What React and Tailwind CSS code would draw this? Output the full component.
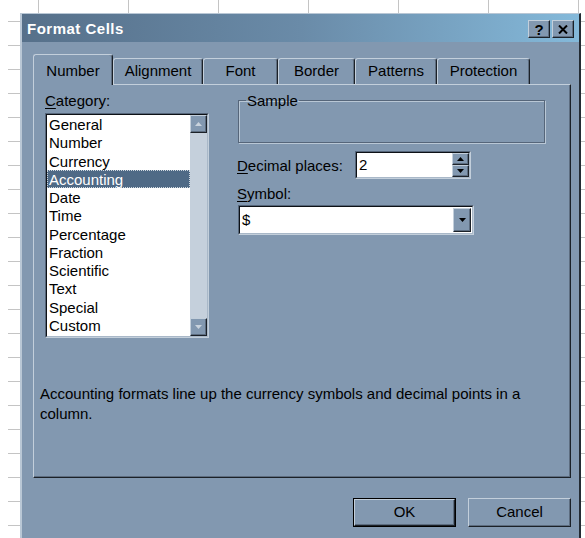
import React from 'react';

const categories = [
  'General', 'Number', 'Currency', 'Accounting', 'Date', 'Time',
  'Percentage', 'Fraction', 'Scientific', 'Text', 'Special', 'Custom',
];

const tabs = [
  { label: 'Number', w: 'w-[80px]', active: true },
  { label: 'Alignment', w: 'w-[90px]' },
  { label: 'Font', w: 'w-[75px]' },
  { label: 'Border', w: 'w-[77px]' },
  { label: 'Patterns', w: 'w-[82px]' },
  { label: 'Protection', w: 'w-[93px]' },
];

// raised 3D edge used by buttons
const raised =
  'border border-t-[#c3cfdb] border-l-[#c3cfdb] border-r-[#1b2128] border-b-[#1b2128] shadow-[inset_-1px_-1px_0_#5d6d80]';

const Arrow = ({ up, color = '#000' }) => (
  <svg width="7" height="4" viewBox="0 0 7 4">
    <path d={up ? 'M0 4h7L3.5 0z' : 'M0 0h7L3.5 4z'} fill={color} />
  </svg>
);

const Sunken = ({ className, children }) => (
  <div className={`border border-t-[#56667a] border-l-[#56667a] border-r-[#c3cfdb] border-b-[#c3cfdb] ${className}`}>
    <div className="w-full h-full border border-t-[#0d1116] border-l-[#0d1116] border-r-[#a9b8c8] border-b-[#a9b8c8] bg-white flex">
      {children}
    </div>
  </div>
);

const Hotkey = ({ k, rest }) => (
  <span>
    <span className="underline underline-offset-2">{k}</span>
    {rest}
  </span>
);

export default function App() {
  return (
    <div className="w-[585px] h-[538px] overflow-hidden bg-white flex font-['Liberation_Sans',Arial,sans-serif] text-[15px] text-black">
      {/* spreadsheet row ticks behind the dialog */}
      <div className="w-[20px] flex flex-col pt-[21px] gap-[23px]">
        {Array.from({ length: 22 }).map((_, i) => (
          <div key={i} className="h-px w-[12px] ml-[8px] bg-[#c4c4c4]" />
        ))}
      </div>

      <div className="w-[561px] flex flex-col">
        {/* column ticks */}
        <div className="h-[13px] shrink-0 flex pl-[18px] gap-[89px]">
          {Array.from({ length: 7 }).map((_, i) => (
            <div key={i} className="w-px h-full bg-[#c4c4c4]" />
          ))}
        </div>

        {/* dialog window */}
        <div className="flex-1 flex flex-col bg-[#8298b0] border-t border-l-2 border-r-2 border-t-[#b9c7d5] border-l-[#b9c7d5] border-r-[#232b33]">
          {/* title bar */}
          <div className="h-[28px] shrink-0 flex items-center justify-between pl-[5px] pr-[5px] bg-gradient-to-r from-[#56708a] via-[#6a8ba8] to-[#84b9da]">
            <span className="text-white font-bold tracking-[0.5px] leading-none">Format Cells</span>
            <div className="flex gap-[2px] mt-[2px]">
              <div className={`w-[22px] h-[18px] flex items-center justify-center bg-[#8298b0] ${raised}`}>
                <span className="font-bold text-[15px] leading-none">?</span>
              </div>
              <div className={`w-[22px] h-[18px] flex items-center justify-center bg-[#8298b0] ${raised}`}>
                <svg width="10" height="9" viewBox="0 0 10 9">
                  <path d="M1 0.5l8 8M9 0.5l-8 8" stroke="#000" strokeWidth="2" />
                </svg>
              </div>
            </div>
          </div>

          {/* body */}
          <div className="flex-1 flex flex-col pt-[12px] pl-[11px] pr-[8px]">
            {/* tab strip */}
            <div className="h-[30px] flex items-end relative z-10">
              {tabs.map((t) => (
                <div
                  key={t.label}
                  className={`${t.w} flex items-center justify-center rounded-t-[3px] border-t border-l border-r border-t-[#c3cfdb] border-l-[#c3cfdb] border-r-[#1b2128] shadow-[inset_-1px_0_0_#5d6d80] ${
                    t.active ? 'h-[31px] -mb-px bg-[#8298b0] pt-[3px]' : 'h-[26px]'
                  }`}
                >
                  {t.label}
                </div>
              ))}
            </div>

            {/* tab page */}
            <div className="h-[394px] flex flex-col border border-t-[#c3cfdb] border-l-[#c3cfdb] border-r-[#1b2128] border-b-[#1b2128] shadow-[inset_-1px_-1px_0_#5d6d80]">
              <div className="flex pl-[11px] pt-[7px] gap-[28px]">
                {/* category list */}
                <div className="w-[164px] flex flex-col">
                  <div className="leading-[17px]"><Hotkey k="C" rest="ategory:" /></div>
                  <Sunken className="mt-[4px] h-[225px]">
                    <div className="flex-1 flex flex-col">
                      {categories.map((c) => (
                        <div
                          key={c}
                          className={`h-[18.25px] leading-[17px] pl-[1px] ${
                            c === 'Accounting'
                              ? 'bg-[#4f6a86] text-white border border-dotted border-[#d0d8e0]'
                              : 'border border-transparent'
                          }`}
                        >
                          {c}
                        </div>
                      ))}
                    </div>
                    <div className="w-[17px] flex flex-col justify-between bg-[#c5d0dc]">
                      <div className={`h-[18px] flex items-center justify-center bg-[#8298b0] ${raised}`}>
                        <Arrow up color="#c9d3dd" />
                      </div>
                      <div className={`h-[18px] flex items-center justify-center bg-[#8298b0] ${raised}`}>
                        <Arrow color="#c9d3dd" />
                      </div>
                    </div>
                  </Sunken>
                </div>

                {/* format options */}
                <div className="flex flex-col">
                  <fieldset className="w-[307px] h-[51px] ml-[1px] border border-[#56667a] shadow-[inset_1px_1px_0_#b9c7d5,1px_1px_0_#b9c7d5]">
                    <legend className="ml-[7px] px-[1px] leading-[17px]">Sample</legend>
                  </fieldset>

                  <div className="flex items-center mt-[8px]">
                    <div className="w-[118px] leading-[17px]"><Hotkey k="D" rest="ecimal places:" /></div>
                    <Sunken className="w-[116px] h-[28px]">
                      <div className="flex-1 pl-[2px] flex items-center">2</div>
                      <div className="w-[17px] flex flex-col">
                        <div className={`flex-1 flex items-center justify-center bg-[#8298b0] ${raised}`}>
                          <Arrow up />
                        </div>
                        <div className={`flex-1 flex items-center justify-center bg-[#8298b0] ${raised}`}>
                          <Arrow />
                        </div>
                      </div>
                    </Sunken>
                  </div>

                  <div className="mt-[6px] leading-[17px]"><Hotkey k="S" rest="ymbol:" /></div>
                  <Sunken className="mt-[3px] ml-[1px] w-[236px] h-[30px]">
                    <div className="flex-1 pl-[2px] flex items-center">$</div>
                    <div className={`w-[18px] my-[1px] mr-[1px] flex items-center justify-center bg-[#8298b0] ${raised}`}>
                      <Arrow />
                    </div>
                  </Sunken>
                </div>
              </div>

              <p className="mt-[46px] ml-[6px] w-[515px] leading-[20px]">
                Accounting formats line up the currency symbols and decimal points in a column.
              </p>
            </div>

            {/* dialog buttons */}
            <div className="flex justify-end gap-[12px] mt-[20px]">
              <div className="w-[103px] h-[29px] border border-black">
                <div className={`w-full h-full flex items-center justify-center ${raised}`}>OK</div>
              </div>
              <div className={`w-[103px] h-[29px] flex items-center justify-center ${raised}`}>Cancel</div>
            </div>
          </div>
        </div>
      </div>

      {/* ticks to the right of the dialog */}
      <div className="flex-1 flex flex-col pt-[21px] gap-[23px]">
        {Array.from({ length: 22 }).map((_, i) => (
          <div key={i} className="h-px w-full bg-[#c4c4c4]" />
        ))}
      </div>
    </div>
  );
}
